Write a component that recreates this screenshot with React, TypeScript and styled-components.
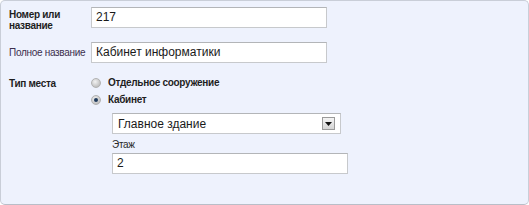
import React from "react";
import styled, { createGlobalStyle } from "styled-components";

const Global = createGlobalStyle`
  html, body { margin: 0; padding: 0; background: #ffffff; }
  * { box-sizing: border-box; }
`;

const Panel = styled.div`
  width: 529px;
  height: 205px;
  background: #eef2fd;
  border: 1px solid #c9ced8;
  border-bottom-color: #b9bec8;
  border-radius: 5px;
  padding: 6px 8px 0 8px;
  font-family: "Liberation Sans", Arial, sans-serif;
  color: #1e1e1e;
`;

const Row = styled.div<{ $gap: number; $center?: boolean }>`
  display: grid;
  grid-template-columns: 82px 1fr;
  align-items: ${(p) => (p.$center ? "center" : "start")};
  margin-bottom: ${(p) => p.$gap}px;
`;

const Label = styled.div<{ $bold?: boolean; $color?: string; $pt?: number; $lh?: number }>`
  font-size: 10px;
  letter-spacing: -0.3px;
  line-height: ${(p) => p.$lh || 13}px;
  white-space: nowrap;
  font-weight: ${(p) => (p.$bold ? 700 : 400)};
  color: ${(p) => p.$color || "#1e1e1e"};
  padding-top: ${(p) => p.$pt || 0}px;
`;

const TextInput = styled.div<{ $width: number }>`
  width: ${(p) => p.$width}px;
  height: 21px;
  background: #ffffff;
  border: 1px solid #c7c9cc;
  border-top-color: #b3b5b8;
  font-size: 12px;
  line-height: 19px;
  padding-left: 4px;
  color: #1a1a1a;
`;

const Choices = styled.div`
  display: flex;
  flex-direction: column;
`;

const RadioRow = styled.div`
  display: flex;
  align-items: center;
  height: 17px;
  gap: 7px;
  font-size: 10px;
  letter-spacing: -0.3px;
  font-weight: 700;
`;

const Radio = styled.span<{ $checked?: boolean }>`
  position: relative;
  width: 10px;
  height: 10px;
  border-radius: 50%;
  background: radial-gradient(circle at 40% 35%, #f2f2f2 0%, #c9c9c9 60%, #a9a9a9 100%);
  border: 1px solid #b2b2b2;
  flex: none;
  &::after {
    content: "";
    display: ${(p) => (p.$checked ? "block" : "none")};
    position: absolute;
    left: 2px;
    top: 2px;
    width: 4px;
    height: 4px;
    border-radius: 50%;
    background: #1f3a5c;
  }
`;

const Sub = styled.div`
  margin-left: 21px;
  margin-top: 5px;
  display: flex;
  flex-direction: column;
`;

const Select = styled.div`
  width: 229px;
  height: 21px;
  background: #ffffff;
  border: 1px solid #c7c9cc;
  border-top-color: #b3b5b8;
  display: flex;
  align-items: center;
  justify-content: space-between;
  padding: 0 5px 0 5px;
  font-size: 12px;
  color: #1a1a1a;
`;

const DropButton = styled.span`
  width: 13px;
  height: 13px;
  border: 1px solid #9a9a9a;
  background: linear-gradient(#f4f4f4, #d4d4d4);
  display: flex;
  align-items: center;
  justify-content: center;
`;

const SubLabel = styled.div`
  font-size: 10px;
  letter-spacing: -0.3px;
  line-height: 13px;
  color: #2a2a2a;
  margin-top: 4px;
  margin-bottom: 2px;
`;

export default function App() {
  return (
    <>
      <Global />
      <Panel>
        <Row $gap={11}>
          <Label $bold $pt={2} $lh={11}>
            Номер или
            <br />
            название
          </Label>
          <TextInput $width={236}>217</TextInput>
        </Row>
        <Row $gap={11} $center>
          <Label $color="#3b2f4e">Полное название</Label>
          <TextInput $width={236}>Кабинет информатики</TextInput>
        </Row>
        <Row $gap={0}>
          <Label $bold $pt={3}>
            Тип места
          </Label>
          <Choices>
            <RadioRow>
              <Radio />
              Отдельное сооружение
            </RadioRow>
            <RadioRow>
              <Radio $checked />
              Кабинет
            </RadioRow>
            <Sub>
              <Select>
                <span>Главное здание</span>
                <DropButton>
                  <svg width="7" height="4" viewBox="0 0 7 4">
                    <polygon points="0,0 7,0 3.5,4" fill="#111" />
                  </svg>
                </DropButton>
              </Select>
              <SubLabel>Этаж</SubLabel>
              <TextInput $width={236}>2</TextInput>
            </Sub>
          </Choices>
        </Row>
      </Panel>
    </>
  );
}
